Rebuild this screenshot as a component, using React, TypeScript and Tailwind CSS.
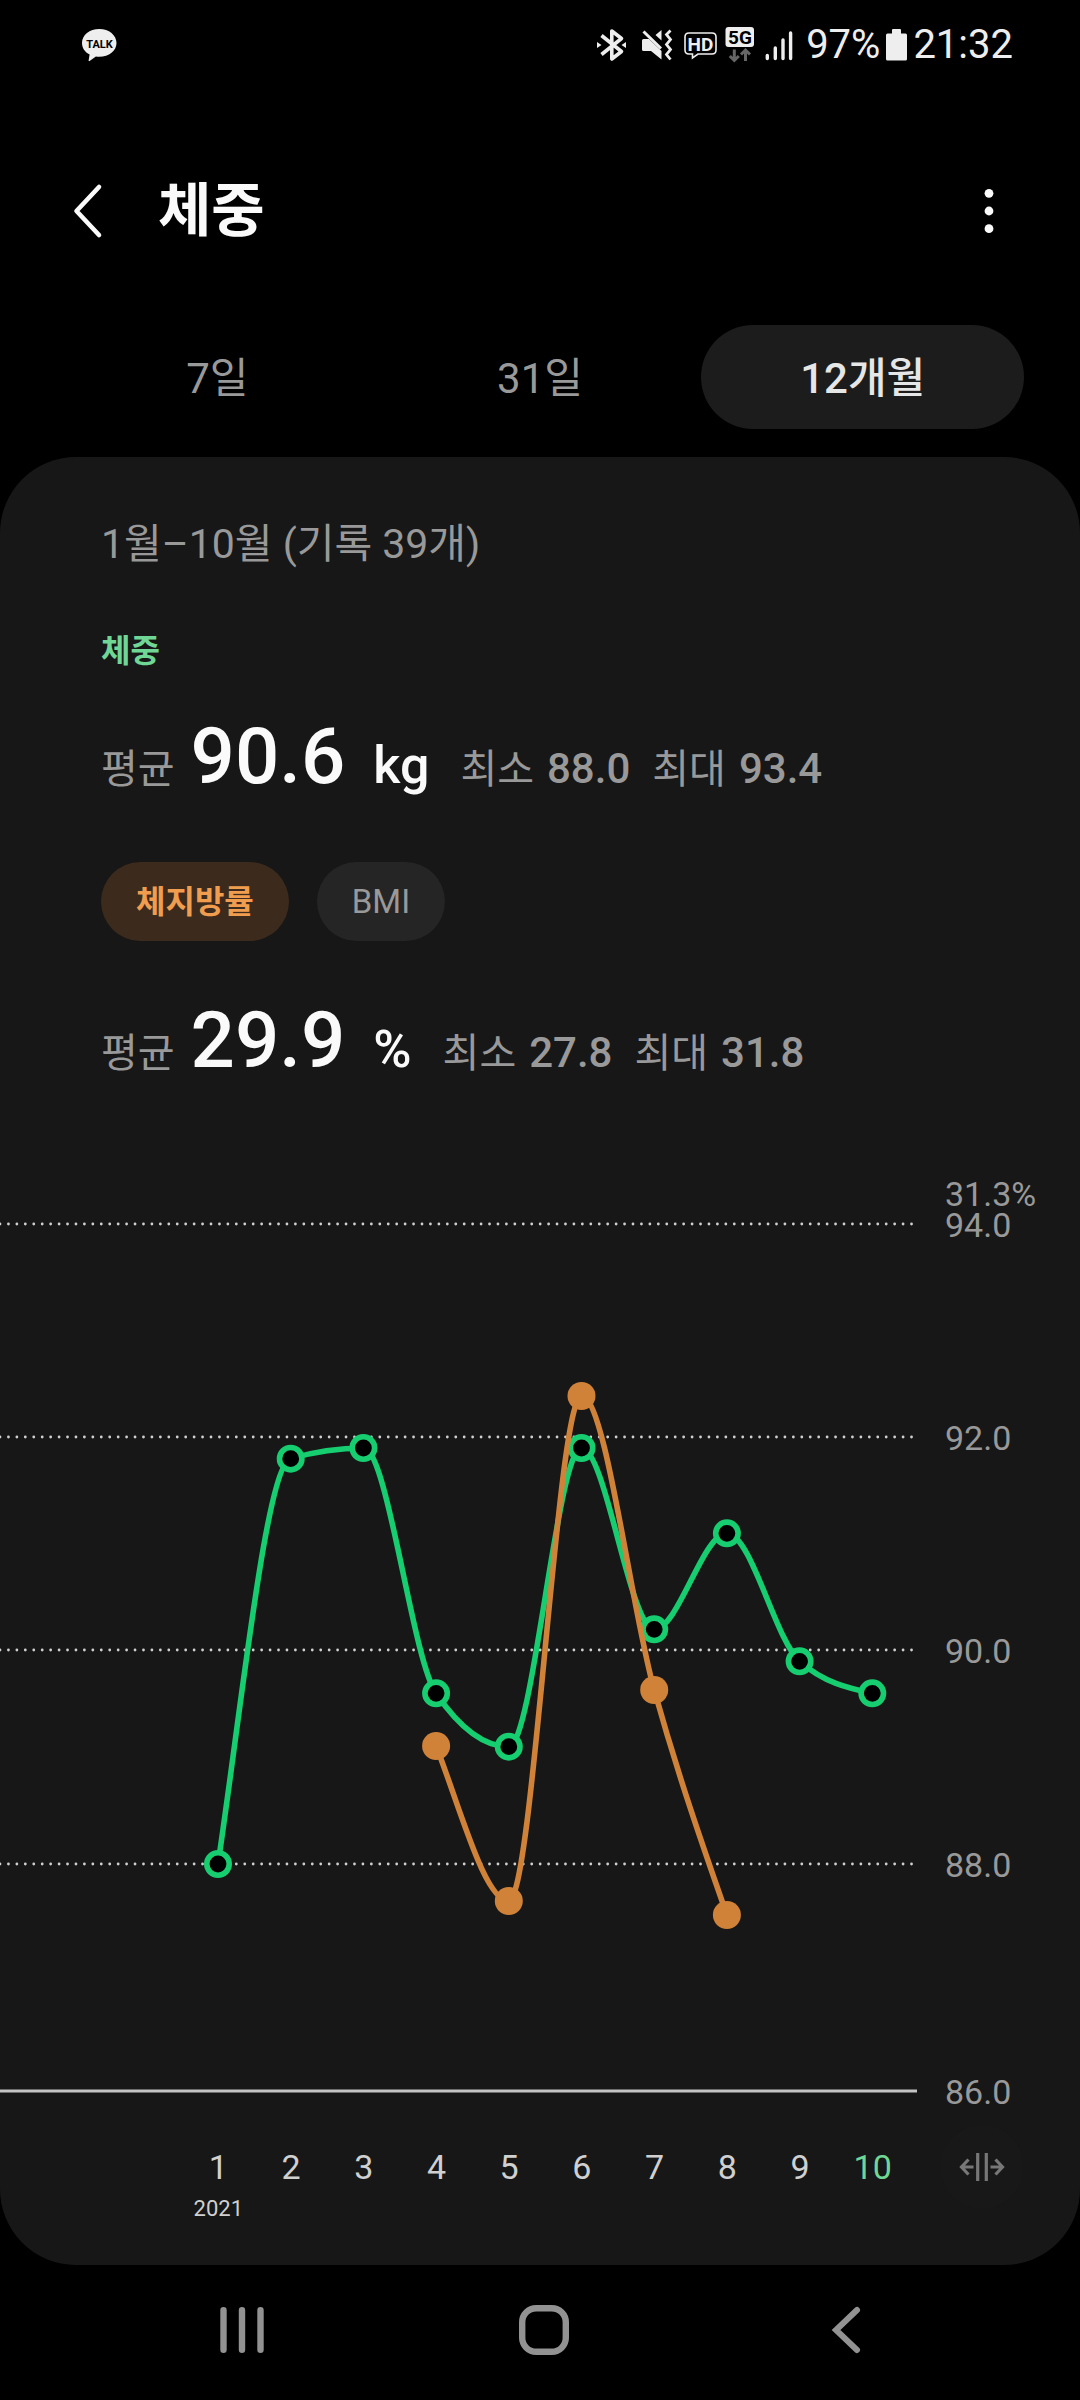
type Stat = {
  average: string;
  unit: string;
  min: string;
  max: string;
};

type Point = { x: number; y: number };

const weightStat: Stat = { average: "90.6", unit: "kg", min: "88.0", max: "93.4" };
const fatStat: Stat = { average: "29.9", unit: "%", min: "27.8", max: "31.8" };

const tabs = ["7일", "31일", "12개월"];
const months = [1, 2, 3, 4, 5, 6, 7, 8, 9, 10];

const weights = [88.0, 91.8, 91.9, 89.6, 89.1, 91.9, 90.2, 91.1, 89.9, 89.6];
// body fat is plotted on its own scale, so only the heights are kept here
const fatHeights = [
  { month: 4, y: 576 },
  { month: 5, y: 731 },
  { month: 6, y: 226 },
  { month: 7, y: 520 },
  { month: 8, y: 745 },
];

const gridLines = [
  { label: "94.0", y: 54 },
  { label: "92.0", y: 267 },
  { label: "90.0", y: 480 },
  { label: "88.0", y: 694 },
];

const BASELINE = 921;
const PLOT_RIGHT = 917;

function monthX(month: number) {
  return 218 + (month - 1) * 72.7;
}

function weightY(value: number) {
  return 54 + (94 - value) * 106.67;
}

// monotone cubic, flat at every peak and valley
function curvePath(points: Point[]) {
  const last = points.length - 1;
  const secants = points.slice(1).map((p, i) => (p.y - points[i].y) / (p.x - points[i].x));
  const tangents = points.map((_, i) => {
    if (i === 0) return secants[0] * 1.2;
    if (i === last) return 0;
    const a = secants[i - 1];
    const b = secants[i];
    if (a * b <= 0) return 0;
    return Math.sign(a) * Math.min(2 * Math.abs(a), 2 * Math.abs(b), Math.abs(a + b) / 2);
  });
  tangents[last] = (3 * secants[last - 1] - tangents[last - 1]) / 2;

  let d = `M${points[0].x},${points[0].y}`;
  for (let i = 1; i < points.length; i++) {
    const from = points[i - 1];
    const to = points[i];
    const third = (to.x - from.x) / 3;
    d += `C${from.x + third},${from.y + tangents[i - 1] * third} ${to.x - third},${to.y - tangents[i] * third} ${to.x},${to.y}`;
  }
  return d;
}

function StatusBar() {
  return (
    <div className="flex h-[90px] items-center justify-between pl-[81px] pr-[67px] text-[#eeeeee]">
      <svg className="h-9 w-9" viewBox="81 27 36 36" aria-label="KakaoTalk">
        <path
          d="M99.300 29C89.500 29 82 35 82 43c0 5 2.800 9 7.600 11.600L88.600 60.500c-.1.700.5.900 1 .6l6.300-4.500c1.100.2 2.200.2 3.400.2 9.800 0 17.200-6 17.200-13.800S109 29 99.300 29Z"
          fill="#eeeeee"
        />
        <text x="99.500" y="47.800" textAnchor="middle" fontSize="11" fontWeight="700" fill="#000">
          TALK
        </text>
      </svg>

      <div className="flex items-center gap-1.5">
        <div className="mr-[3px] flex items-center gap-2">
          <svg className="h-9 w-[34px]" viewBox="596 26 34 36" fill="none" stroke="#eeeeee" strokeWidth="3.600" aria-label="Bluetooth">
            <path d="M601.500 34.500l20 16-9.700 7.500V30l9.700 7.500L601.500 53.500" strokeLinejoin="round" />
            <path d="M597 41l4.500 3-4.500 3zM626 41l-4.500 3 4.500 3z" fill="#eeeeee" stroke="none" />
          </svg>
          <svg className="h-9 w-[38px]" viewBox="638 26 38 36" aria-label="Mute, vibrate">
            <path d="M642 39.500q0-1.500 1.500-1.500h5.500l12.500 12v8.500L651 50h-7.500q-1.500 0-1.500-1.500zM661.500 29v10.500l-6-5.500z" fill="#eeeeee" />
            <path d="M643.500 30.500l17.500 17" stroke="#eeeeee" strokeWidth="3" />
            <path d="M670.500 29.500l-4 4 4 5-4 5 4 5-4 5 4 5" stroke="#eeeeee" strokeWidth="2.800" fill="none" />
          </svg>
          <svg className="h-9 w-[33px]" viewBox="684 26 33 36" aria-label="HD">
            <path
              d="M689 32h23q4 0 4 4v13q0 4-4 4h-14l-5.500 4v-4H689q-4 0-4-4V36q0-4 4-4z"
              fill="none"
              stroke="#eeeeee"
              strokeWidth="1.600"
            />
            <text x="700.500" y="49.500" textAnchor="middle" fontSize="19" fontWeight="700" fill="#eeeeee">
              HD
            </text>
          </svg>
          <svg className="h-9 w-[30px]" viewBox="725 26 30 36" aria-label="5G">
            <rect x="725.500" y="26" width="28.500" height="20" rx="3" fill="#eeeeee" />
            <text x="740" y="43" textAnchor="middle" fontSize="19" fontWeight="700" fill="#000">
              5G
            </text>
            <path d="M734.300 48.500v11M729.800 55l4.500 4.500 4.500-4.500M745.500 60V49M741 53.500l4.500-4.500 4.500 4.500" stroke="#666" strokeWidth="3" fill="none" />
          </svg>
          <svg className="h-9 w-[34px]" viewBox="763 26 34 36" stroke="#eeeeee" strokeWidth="3.400" strokeLinecap="round" aria-label="Signal">
            <path d="M767.300 54.500v3M775.300 47v10.500M783 39v18.500M790.600 32v25.500" />
          </svg>
        </div>
        <span className="text-[40px] leading-[48px]">97%</span>
        <svg className="h-9 w-[21px]" viewBox="885 26 21 36" fill="#eeeeee" aria-label="Battery">
          <path d="M891 29q0-1 1-1h7q1 0 1 1v3.500h4.500q1.500 0 1.500 1.500v24q0 1.500-1.500 1.500h-18q-1.500 0-1.500-1.500V34q0-1.500 1.500-1.500h4.500z" />
        </svg>
        <span className="text-[40px] leading-[48px]">21:32</span>
      </div>
    </div>
  );
}

function StatRow({ stat }: { stat: Stat }) {
  return (
    <p className="flex h-24 items-baseline text-[40px] leading-[96px] text-[#999999]">
      <span>평균</span>
      <span className="ml-4 text-[78px] font-medium text-[#fafafa]">{stat.average}</span>
      <span className="ml-7 text-[52px] font-medium text-[#fafafa]">{stat.unit}</span>
      <span className="ml-[31px]">최소</span>
      <span className="ml-[13px] text-[42px] font-medium">{stat.min}</span>
      <span className="ml-[22px]">최대</span>
      <span className="ml-[13px] text-[42px] font-medium">{stat.max}</span>
    </p>
  );
}

function TrendChart() {
  const weightPoints = weights.map((value, i) => ({ x: monthX(i + 1), y: weightY(value) }));
  const fatPoints = fatHeights.map((item) => ({ x: monthX(item.month), y: item.y }));

  return (
    <svg className="block w-full" viewBox="0 0 1080 950" role="img" aria-label="체중 그래프">
      {gridLines.map((line) => (
        <g key={line.label}>
          <line
            x1="0"
            x2="913"
            y1={line.y}
            y2={line.y}
            stroke="#d0d0d0"
            strokeWidth="2.800"
            strokeLinecap="round"
            strokeDasharray="0 8.440"
          />
          <text x="945" y={line.y + 13} fontSize="34" fill="#999999">
            {line.label}
          </text>
        </g>
      ))}
      <text x="945" y="36" fontSize="34" fill="#999999">
        31.3%
      </text>
      <line x1="0" x2={PLOT_RIGHT} y1={BASELINE} y2={BASELINE} stroke="#c4c4c4" strokeWidth="3" />
      <text x="945" y={BASELINE + 13} fontSize="34" fill="#999999">
        86.0
      </text>

      <path d={curvePath(weightPoints)} fill="none" stroke="#16cd70" strokeWidth="5.600" />
      {weightPoints.map((p) => (
        <circle key={p.x} cx={p.x} cy={p.y} r="11.200" fill="#000" stroke="#16cd70" strokeWidth="5.600" />
      ))}

      <path d={curvePath(fatPoints)} fill="none" stroke="#d08239" strokeWidth="5.600" />
      {fatPoints.map((p) => (
        <circle key={p.x} cx={p.x} cy={p.y} r="14" fill="#d08239" />
      ))}
    </svg>
  );
}

export default function App() {
  return (
    <main className="min-h-screen bg-black font-['Roboto','Noto_Sans_CJK_KR',sans-serif]">
      <StatusBar />

      <header className="flex h-[235px] items-center px-[66px] pt-1.5">
        <button type="button" aria-label="뒤로">
          <svg className="h-14 w-11" viewBox="0 0 44 56" fill="none" stroke="#fafafa" strokeWidth="4.600" strokeLinecap="round" strokeLinejoin="round">
            <path d="M33 4L10.500 28 33 52" />
          </svg>
        </button>
        <h1 className="ml-12 text-[58px] font-bold leading-[72px] text-[#fafafa]">체중</h1>
        <button type="button" aria-label="더보기" className="ml-auto">
          <svg className="h-14 w-[50px]" viewBox="0 0 50 56" fill="#fafafa">
            <circle cx="25" cy="10.300" r="4.400" />
            <circle cx="25" cy="28" r="4.400" />
            <circle cx="25" cy="45.700" r="4.400" />
          </svg>
        </button>
      </header>

      <nav className="grid grid-cols-3 px-14" role="tablist">
        {tabs.map((tab, i) => (
          <button
            key={tab}
            type="button"
            role="tab"
            aria-selected={i === 2}
            className={`h-[104px] rounded-full pt-1 text-[42px] leading-[56px] ${
              i === 2 ? "bg-[#1c1c1c] font-medium text-[#e6e6e6]" : "text-[#999999]"
            }`}
          >
            {tab}
          </button>
        ))}
      </nav>

      <section className="mt-7 rounded-[76px] bg-[#171717] pb-[42px] pt-[59px]">
        <div className="px-[101px]">
          <p className="text-[41px] leading-[56px] text-[#999999]">1월–10월 (기록 39개)</p>
          <h2 className="mb-9 mt-[57px] text-[32px] font-bold leading-[44px] text-[#6fd696]">체중</h2>
          <StatRow stat={weightStat} />
          <div className="mb-[52px] mt-[57px] flex gap-7">
            <button type="button" className="h-[79px] rounded-full bg-[#3c2b1c] px-[35px] text-[32px] font-bold leading-[44px] text-[#f09d4f]">
              체지방률
            </button>
            <button type="button" className="h-[79px] rounded-full bg-[#252525] px-[35px] text-[33px] leading-[44px] text-[#999999]">
              BMI
            </button>
          </div>
          <StatRow stat={fatStat} />
        </div>

        <div className="mt-[81px]">
          <TrendChart />
        </div>

        <div className="mt-[5px] grid grid-cols-[182fr_727fr_146fr_25fr] items-center">
          <ol className="col-start-2 grid grid-cols-10 pt-5 text-center text-[34px] leading-[44px] text-[#d0d0d0]">
            {months.map((month) => (
              <li key={month} className={month === 10 ? "text-[#6fd696]" : ""}>
                {month}
                <span className="mt-1.5 block h-7 text-[22px] leading-7">{month === 1 ? "2021" : ""}</span>
              </li>
            ))}
          </ol>
          <button
            type="button"
            aria-label="확대"
            className="grid h-[84px] w-[84px] place-items-center self-start justify-self-center rounded-full bg-[#181818]"
          >
            <svg className="h-[30px] w-[46px]" viewBox="0 0 46 30" fill="none" stroke="#777777" strokeWidth="3.200">
              <path d="M18.700 1v28M27.300 1v28" />
              <path d="M14.500 15H3M9.500 7.500L2.500 15l7 7.500M31.500 15H43M36.500 7.500l7 7.500-7 7.500" />
            </svg>
          </button>
        </div>
      </section>

      <nav className="grid h-[130px] grid-cols-3 place-items-center pl-[91px] pr-[83px]" aria-label="시스템 탐색">
        <button type="button" aria-label="최근 앱">
          <svg className="h-[52px] w-[52px]" viewBox="0 0 52 52" stroke="#929292" strokeWidth="6.400" strokeLinecap="round">
            <path d="M7.500 6.200v39.600M26 6.200v39.600M44.500 6.200v39.600" />
          </svg>
        </button>
        <button type="button" aria-label="홈">
          <svg className="h-[52px] w-[52px]" viewBox="0 0 52 52" fill="none" stroke="#929292" strokeWidth="6.400">
            <rect x="4.200" y="4.200" width="43.600" height="43.600" rx="14" />
          </svg>
        </button>
        <button type="button" aria-label="이전">
          <svg className="h-[52px] w-[52px]" viewBox="0 0 52 52" fill="none" stroke="#929292" strokeWidth="6" strokeLinecap="round">
            <path d="M37 6L16 26l21 20" />
          </svg>
        </button>
      </nav>
    </main>
  );
}
